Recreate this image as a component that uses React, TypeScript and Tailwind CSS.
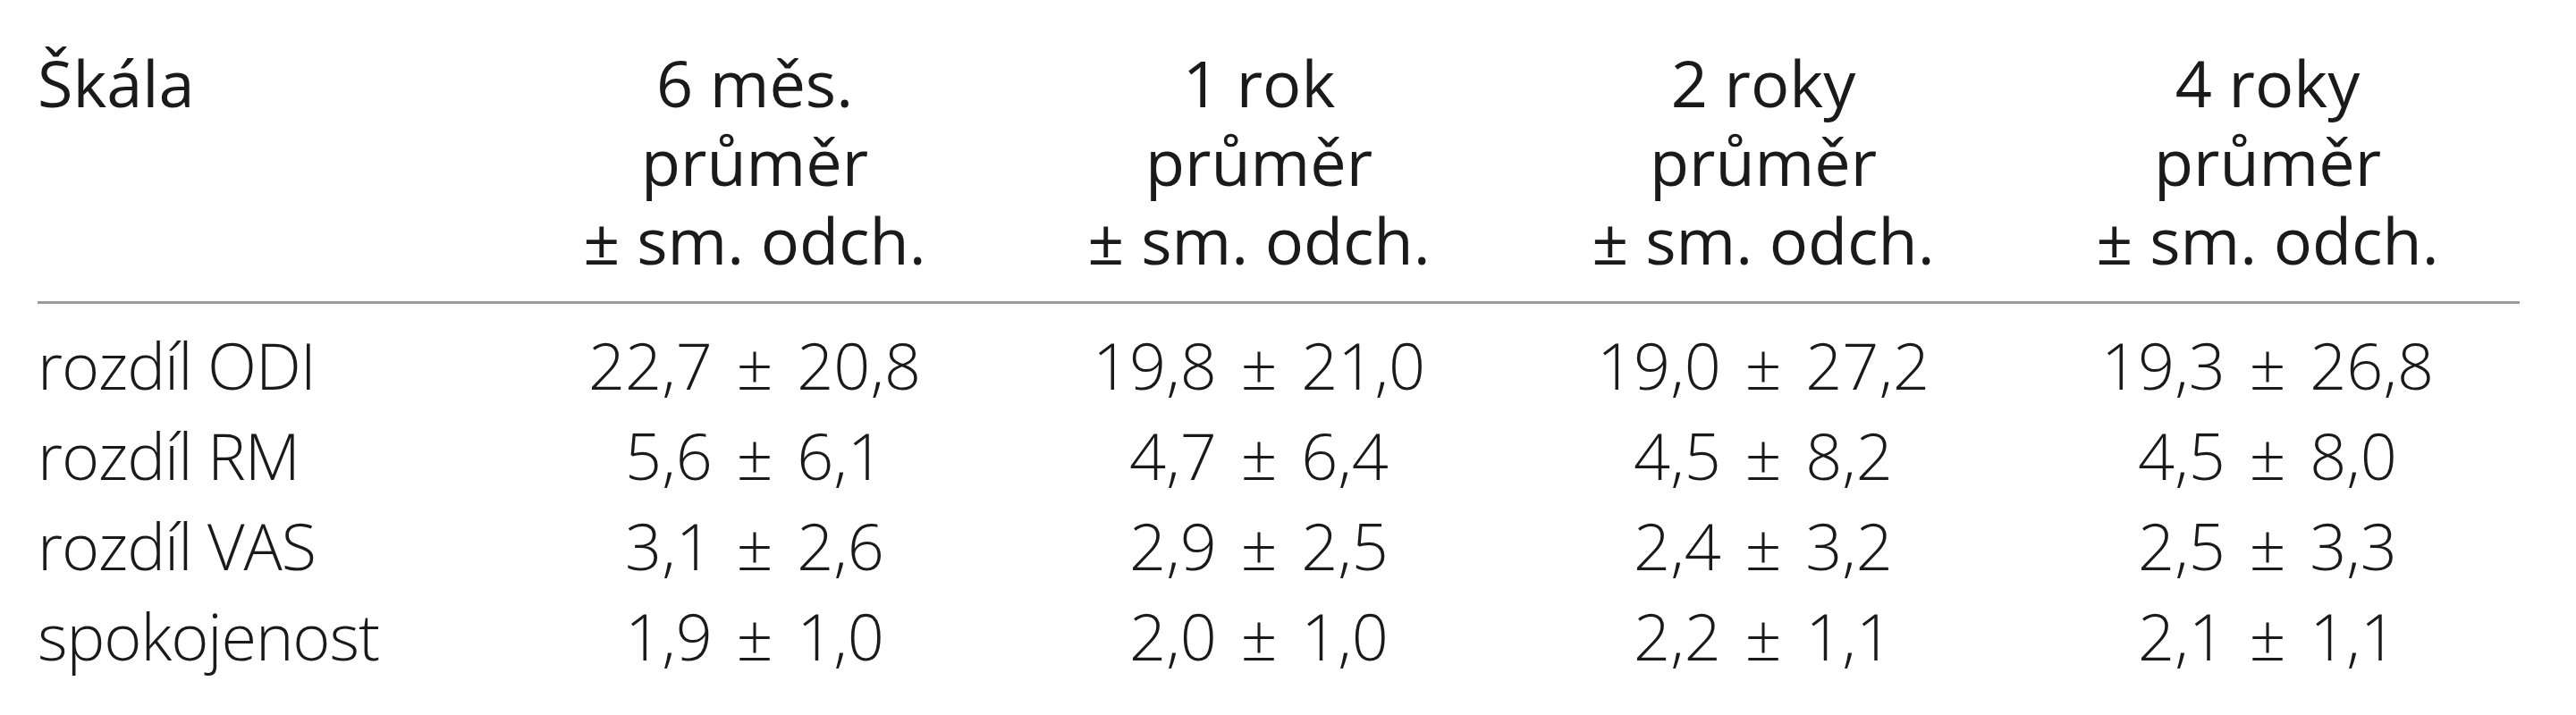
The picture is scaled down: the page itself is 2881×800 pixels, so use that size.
const header = ["6 měs.", "1 rok", "2 roky", "4 roky"]

const rows: [string, string[]][] = [
  ["rozdíl ODI", ["22,7 ± 20,8", "19,8 ± 21,0", "19,0 ± 27,2", "19,3 ± 26,8"]],
  ["rozdíl RM", ["5,6 ± 6,1", "4,7 ± 6,4", "4,5 ± 8,2", "4,5 ± 8,0"]],
  ["rozdíl VAS", ["3,1 ± 2,6", "2,9 ± 2,5", "2,4 ± 3,2", "2,5 ± 3,3"]],
  ["spokojenost", ["1,9 ± 1,0", "2,0 ± 1,0", "2,2 ± 1,1", "2,1 ± 1,1"]],
]

export default function App() {
  return (
    <div className="w-[2881px] h-[800px] bg-white text-[#1a1a1a] font-['Open_Sans',sans-serif] text-[72px]">
      <div className="pl-[42px] pt-[48px]">
        <table className="w-[2776px] table-fixed border-collapse">
          <colgroup>
            <col className="w-[520px]" />
            <col className="w-[564px]" />
            <col className="w-[564px]" />
            <col className="w-[564px]" />
            <col className="w-[564px]" />
          </colgroup>
          <thead>
            <tr className="border-b-[3px] border-[#9b9b9b] leading-[88px]">
              <th className="text-left font-normal align-top pb-[25px] p-0">Škála</th>
              {header.map((h) => (
                <th key={h} className="text-center font-normal align-top pb-[25px] p-0 whitespace-nowrap">
                  {h}
                  <br />
                  průměr
                  <br />± sm. odch.
                </th>
              ))}
            </tr>
          </thead>
          <tbody className="leading-[101px] font-light">
            {rows.map(([label, vals], i) => (
              <tr key={label}>
                <td className={`text-left p-0 whitespace-nowrap tracking-[-0.015em] ${i === 0 ? "pt-[18px]" : ""}`}>
                  {label}
                </td>
                {vals.map((v, j) => (
                  <td
                    key={j}
                    className={`text-center p-0 whitespace-nowrap [word-spacing:8px] ${i === 0 ? "pt-[18px]" : ""}`}
                  >
                    {v}
                  </td>
                ))}
              </tr>
            ))}
          </tbody>
        </table>
      </div>
    </div>
  )
}
